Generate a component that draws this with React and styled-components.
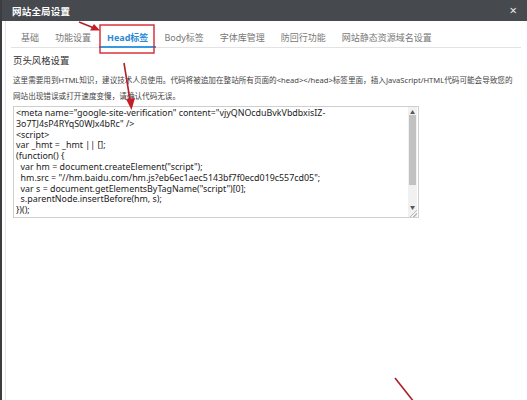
import React from 'react';
import styled, { createGlobalStyle } from 'styled-components';

const GlobalStyle = createGlobalStyle`
    html, body {
        margin: 0;
        padding: 0;
        background: #fff;
    }
    body {
        font-family: "Noto Sans", "Noto Sans CJK SC", sans-serif;
        color: #333;
    }
`

const Dialog = styled.div`
    position: relative;
    width: 527px;
    height: 400px;
    overflow: hidden;
    background: #fff;
    border-left: 2px solid #3b3d41;
    box-sizing: border-box;
`

const TitleBar = styled.div`
    height: 21px;
    background: #46494e;
    display: flex;
    align-items: center;
    justify-content: space-between;
    padding: 0 10px 0 10px;
    color: #fff;
`

const Title = styled.div`
    font-size: 9.5px;
    font-weight: 700;
    letter-spacing: 0.2px;
`

const Close = styled.div`
    font-size: 13px;
    line-height: 1;
    color: #e8e8e8;
`

const Body = styled.div`
    margin-left: 3px;
    border-left: 1px solid #e6e6e6;
    height: 379px;
    padding: 0 0 0 5px;
`

const Tabs = styled.div`
    display: flex;
    align-items: flex-end;
    height: 27px;
    padding-left: 2px;
    border-bottom: 1px solid #e3e3e3;
    width: 510px;
    box-sizing: border-box;
`

const Tab = styled.div`
    font-size: 9px;
    height: 12px;
    line-height: 10px;
    padding: 0 8px 1px;
    color: ${p => (p.$active ? '#2b8bd6' : '#777')};
    font-weight: ${p => (p.$active ? 700 : 400)};
    border-bottom: 2px solid ${p => (p.$active ? '#3a98de' : 'transparent')};
    margin-bottom: -1px;
    white-space: nowrap;
`

const Section = styled.div`
    padding: 5px 0 0 2px;
`

const SectionTitle = styled.div`
    font-size: 9.4px;
    color: #333;
    height: 15px;
    line-height: 15px;
`

const Desc = styled.div`
    margin-top: 4px;
    font-size: 7.6px;
    line-height: 16px;
    color: #444;
    white-space: nowrap;
`

const CodeBox = styled.div`
    margin-top: 2px;
    width: 406px;
    height: 112px;
    border: 1px solid #cfcfcf;
    box-sizing: border-box;
    display: flex;
`

const Code = styled.div`
    flex: 1;
    padding: 1px 0 0 2px;
    font-size: 8.9px;
    line-height: 10.8px;
    color: #222;
    white-space: pre;
    overflow: hidden;
`

const Scroll = styled.div`
    width: 9px;
    display: flex;
    flex-direction: column;
    align-items: center;
    background: #f1f1f1;
    margin-right: 1px;
`

const ScrollArrow = styled.div`
    height: 8px;
    width: 9px;
    display: flex;
    align-items: center;
    justify-content: center;
    font-size: 5px;
    color: #555;
`

const Thumb = styled.div`
    width: 7px;
    height: 70px;
    background: #c1c1c1;
`

const Track = styled.div`
    flex: 1;
`

const Grip = styled.div`
    height: 7px;
    width: 9px;
    background: linear-gradient(135deg, transparent 55%, #bbb 55%, #bbb 62%, transparent 62%, transparent 75%, #bbb 75%, #bbb 82%, transparent 82%);
`

const Overlay = styled.svg`
    position: absolute;
    left: 0;
    top: 0;
    pointer-events: none;
`

const codeLines = [
    '<meta name="google-site-verification" content="vjyQNOcduBvkVbdbxisIZ-',
    '3o7TJ4sP4RYqS0WJx4bRc" />',
    '<script>',
    'var _hmt = _hmt || [];',
    '(function() {',
    '  var hm = document.createElement("script");',
    '  hm.src = "//hm.baidu.com/hm.js?eb6ec1aec5143bf7f0ecd019c557cd05";',
    '  var s = document.getElementsByTagName("script")[0];',
    '  s.parentNode.insertBefore(hm, s);',
    '})();',
]

export default function App() {
    return (
        <>
            <GlobalStyle />
            <Dialog>
                <TitleBar>
                    <Title>网站全局设置</Title>
                    <Close>×</Close>
                </TitleBar>
                <Body>
                    <Tabs>
                        <Tab>基础</Tab>
                        <Tab>功能设置</Tab>
                        <Tab $active>Head标签</Tab>
                        <Tab>Body标签</Tab>
                        <Tab>字体库管理</Tab>
                        <Tab>防回行功能</Tab>
                        <Tab>网站静态资源域名设置</Tab>
                    </Tabs>
                    <Section>
                        <SectionTitle>页头风格设置</SectionTitle>
                        <Desc>
                            这里需要用到HTML知识，建议技术人员使用。代码将被追加在整站所有页面的&lt;head&gt;&lt;/head&gt;标签里面，插入JavaScript/HTML代码可能会导致您的
                            <br />
                            网站出现错误或打开速度变慢，请确认代码无误。
                        </Desc>
                        <CodeBox>
                            <Code>{codeLines.join('\n')}</Code>
                            <Scroll>
                                <ScrollArrow>▲</ScrollArrow>
                                <Thumb />
                                <Track />
                                <ScrollArrow>▼</ScrollArrow>
                                <Grip />
                            </Scroll>
                        </CodeBox>
                    </Section>
                </Body>
                <Overlay width="527" height="400" viewBox="0 0 527 400">
                    <rect x="98" y="25" width="54" height="28" fill="none" stroke="#d9252f" strokeWidth="1.4" />
                    <line x1="77" y1="22" x2="92" y2="28" stroke="#b3202a" strokeWidth="1.6" />
                    <polygon points="98,30.5 88,30.5 92,24" fill="#c41e2a" />
                    <line x1="122" y1="63" x2="128" y2="100" stroke="#b3202a" strokeWidth="1.6" />
                    <polygon points="129.5,110 124,99 133,98" fill="#c41e2a" />
                    <line x1="393" y1="378" x2="412" y2="402" stroke="#a81e28" strokeWidth="1.6" />
                </Overlay>
            </Dialog>
        </>
    )
}
